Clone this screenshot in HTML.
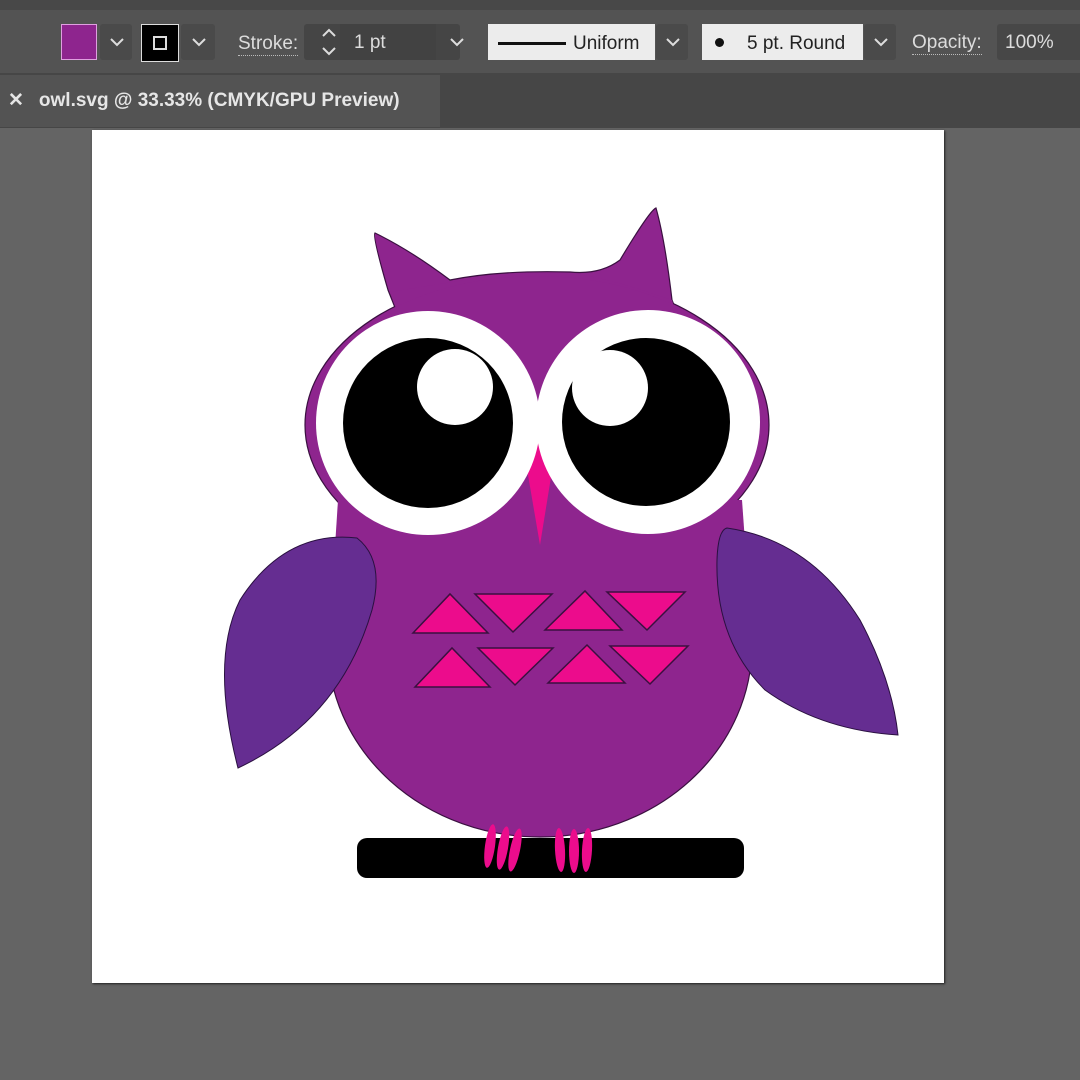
<!DOCTYPE html>
<html><head><style>
body{margin:0;width:1080px;height:1080px;overflow:hidden;background:#646464;font-family:"Liberation Sans",sans-serif;position:relative}
.a{position:absolute}
.top{left:0;top:0;width:1080px;height:10px;background:#484848}
.tb{left:0;top:10px;width:1080px;height:63px;background:#535353}
.tabs{left:0;top:73px;width:1080px;height:55px;background:#464646}
.tab{left:0;top:75px;width:440px;height:52px;background:#535353;color:#e6e6e6;font-size:19px;font-weight:bold;line-height:52px}
.box{background:#4a4a4a;border-radius:3px}
.lt{background:#ececec;color:#222;font-size:19px}
.lbl{color:#dcdcdc;font-size:19px;border-bottom:1px dotted #bbb;line-height:22px}
</style></head><body>
<div class="a top"></div>
<div class="a tb"></div>
<div class="a tabs"></div>
<div class="a tab"><span style="padding-left:8px">✕</span><span style="padding-left:15px">owl.svg @ 33.33% (CMYK/GPU Preview)</span></div>

<div class="a" style="left:61px;top:24px;width:34px;height:34px;background:#8e258e;border:1px solid #e0a0e0"></div>
<div class="a box" style="left:100px;top:24px;width:32px;height:36px"></div>
<svg class="a" style="left:108px;top:36px" width="18" height="12"><path d="M3 3l6 6 6-6" stroke="#ddd" stroke-width="2" fill="none"/></svg>
<div class="a" style="left:141px;top:24px;width:36px;height:36px;background:#000;border:1px solid #ddd"></div>
<div class="a" style="left:153px;top:36px;width:10px;height:10px;border:2px solid #ddd"></div>
<div class="a box" style="left:181px;top:24px;width:34px;height:36px"></div>
<svg class="a" style="left:190px;top:36px" width="18" height="12"><path d="M3 3l6 6 6-6" stroke="#ddd" stroke-width="2" fill="none"/></svg>
<div class="a lbl" style="left:238px;top:33px">Stroke:</div>
<div class="a box" style="left:304px;top:24px;width:156px;height:36px;background:#454545"></div>
<div class="a" style="left:340px;top:24px;width:96px;height:36px;background:#424242"></div>
<svg class="a" style="left:318px;top:26px" width="22" height="32"><path d="M5 10l6-6 6 6M5 22l6 6 6-6" stroke="#ddd" stroke-width="2" fill="none"/></svg>
<div class="a" style="left:354px;top:32px;color:#ddd;font-size:19px">1 pt</div>
<svg class="a" style="left:448px;top:36px" width="18" height="12"><path d="M3 3l6 6 6-6" stroke="#ddd" stroke-width="2" fill="none"/></svg>
<div class="a lt" style="left:488px;top:24px;width:167px;height:36px"></div>
<div class="a" style="left:498px;top:42px;width:68px;height:3px;background:#111"></div>
<div class="a" style="left:573px;top:33px;color:#222;font-size:19px">Uniform</div>
<div class="a box" style="left:656px;top:24px;width:32px;height:36px"></div>
<svg class="a" style="left:664px;top:36px" width="18" height="12"><path d="M3 3l6 6 6-6" stroke="#ddd" stroke-width="2" fill="none"/></svg>
<div class="a lt" style="left:702px;top:24px;width:161px;height:36px"></div>
<div class="a" style="left:715px;top:38px;width:9px;height:9px;border-radius:50%;background:#111"></div>
<div class="a" style="left:747px;top:33px;color:#222;font-size:19px">5 pt. Round</div>
<div class="a box" style="left:864px;top:24px;width:32px;height:36px"></div>
<svg class="a" style="left:872px;top:36px" width="18" height="12"><path d="M3 3l6 6 6-6" stroke="#ddd" stroke-width="2" fill="none"/></svg>
<div class="a lbl" style="left:912px;top:32px">Opacity:</div>
<div class="a box" style="left:997px;top:24px;width:90px;height:36px;background:#474747"></div>
<div class="a" style="left:1005px;top:32px;color:#ddd;font-size:19px">100%</div>

<div class="a" style="left:92px;top:130px;width:852px;height:853px;background:#fff;box-shadow:1px 1px 2px #222"></div>
<svg class="a" style="left:0;top:0" width="1080" height="1080">
<g stroke="#3a1040" stroke-width="1.2" fill="#8e258e">
<path d="M375 233 Q372 235 388 290 L400 320 L680 320 L672 300 Q665 240 656 208 Q650 210 620 260 Q600 275 570 272 Q500 270 450 280 Q410 250 375 233Z"/>
<ellipse cx="537" cy="425" rx="232" ry="150"/>
<ellipse cx="540" cy="645" rx="212" ry="192"/>
</g>
<g fill="#8e258e">
<path d="M390 292 L400 320 L678 320 L672 300 Q600 275 570 274 Q500 272 452 282Z"/>
<ellipse cx="537" cy="425" rx="231" ry="149"/>
<path d="M338 500 L742 500 L752 640 L329 640Z"/>
</g>
<path d="M522 440 L557 440 L540 545Z" fill="#ec0c8c"/>
<path d="M357 538 Q385 560 372 610 Q340 720 238 768 Q210 660 240 600 Q285 530 357 538Z" fill="#652d91" stroke="#2a1040" stroke-width="1"/>
<path d="M727 528 Q810 540 860 620 Q892 680 898 735 Q820 730 765 690 Q715 640 717 560 Q718 530 727 528Z" fill="#652d91" stroke="#2a1040" stroke-width="1"/>
<circle cx="428" cy="423" r="112" fill="#fff"/>
<circle cx="648" cy="422" r="112" fill="#fff"/>
<circle cx="428" cy="423" r="85" fill="#000"/>
<circle cx="646" cy="422" r="84" fill="#000"/>
<circle cx="455" cy="387" r="38" fill="#fff"/>
<circle cx="610" cy="388" r="38" fill="#fff"/>
<g fill="#ec0c8c" stroke="#3a1040" stroke-width="1.5">
<path d="M413 633 L488 633 L450 594Z"/><path d="M475 594 L552 594 L513 632Z"/>
<path d="M545 630 L622 630 L585 591Z"/><path d="M607 592 L685 592 L647 630Z"/>
<path d="M415 687 L490 687 L452 648Z"/><path d="M478 648 L553 648 L515 685Z"/>
<path d="M548 683 L625 683 L587 645Z"/><path d="M610 646 L688 646 L650 684Z"/>
</g>
<rect x="357" y="838" width="387" height="40" rx="10" fill="#000"/>
<g fill="#ec0c8c">
<ellipse cx="490" cy="846" rx="5" ry="22" transform="rotate(8 490 846)"/>
<ellipse cx="503" cy="848" rx="5" ry="22" transform="rotate(10 503 848)"/>
<ellipse cx="515" cy="850" rx="5" ry="22" transform="rotate(12 515 850)"/>
<ellipse cx="560" cy="850" rx="5" ry="22" transform="rotate(-3 560 850)"/>
<ellipse cx="574" cy="851" rx="5" ry="22"/>
<ellipse cx="587" cy="850" rx="5" ry="22" transform="rotate(3 587 850)"/>
</g>
</svg>
</body></html>
